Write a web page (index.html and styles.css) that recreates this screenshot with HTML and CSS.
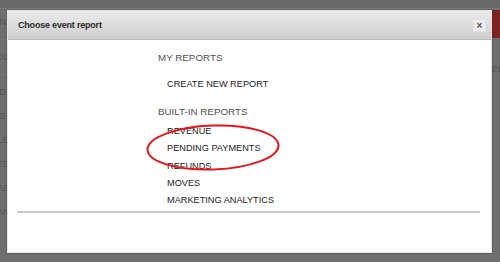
FILE: index.html
```html
<!DOCTYPE html>
<html lang="en">
<head>
    <meta charset="UTF-8">
    <meta name="viewport" content="width=device-width, initial-scale=1.0">
    <title>Choose event report</title>
    <link rel="stylesheet" href="styles.css">
</head>
<body>
    <!-- page behind the dialog, mostly covered -->
    <div class="page">
        <div class="topbar"></div>
        <div class="page-main">
            <ul class="side-nav">
                <li>IN</li>
                <li class="gap">DOC</li>
                <li class="gap">ID</li>
                <li>IS</li>
                <li>LS</li>
                <li>TS</li>
                <li>AS</li>
                <li>AN</li>
            </ul>
            <div class="side-right">
                <div class="red-btn"></div>
                <div class="right-label">EL</div>
            </div>
        </div>
    </div>

    <div class="modal">
        <div class="modal-header">
            <span class="modal-title">Choose event report</span>
            <span class="modal-close">&times;</span>
        </div>
        <div class="modal-body">
            <div class="report-menu">
                <div class="menu-heading">MY REPORTS</div>
                <ul class="menu-list first">
                    <li>CREATE NEW REPORT</li>
                </ul>
                <div class="menu-heading">BUILT-IN REPORTS</div>
                <ul class="menu-list second">
                    <li>REVENUE</li>
                    <li>PENDING PAYMENTS</li>
                    <li>REFUNDS</li>
                    <li>MOVES</li>
                    <li>MARKETING ANALYTICS</li>
                </ul>
            </div>
            <div class="divider"></div>
        </div>
    </div>

    <!-- hand drawn highlight -->
    <svg class="highlight" width="500" height="262" viewBox="0 0 500 262">
        <ellipse cx="213" cy="147.5" rx="65.5" ry="22" transform="rotate(-2 213 147.5)" fill="none" stroke="#e8141b" stroke-width="2"/>
    </svg>
</body>
</html>
```

FILE: styles.css
```css
body {
    margin: 0;
    width: 500px;
    height: 262px;
    overflow: hidden;
    position: relative;
    background: #6f6f6f;
    font-family: "Liberation Sans", Arial, sans-serif;
}

.page {
    height: 262px;
    overflow: hidden;
    display: flex;
    flex-direction: column;
}

.topbar {
    height: 8px;
    background: #676767;
    border-bottom: 1px solid #7a7a7a;
}

.page-main {
    flex: 1;
    display: flex;
    justify-content: space-between;
}

.side-nav {
    list-style: none;
    margin: 0;
    padding: 6px 0 0;
    color: #545454;
    font-size: 9px;
}

.side-nav li {
    line-height: 14px;
    margin-bottom: 10px;
    margin-left: -3px;
}

.side-nav li.gap {
    border-top: 1px solid #767676;
    padding-top: 10px;
}

.side-right {
    width: 30px;
    display: flex;
    flex-direction: column;
    align-items: flex-end;
}

.red-btn {
    margin-top: 1px;
    width: 8px;
    height: 28px;
    background: #7d2424;
}

.right-label {
    margin-top: 26px;
    font-size: 9px;
    color: #555;
    margin-right: -3px;
}

.modal {
    position: absolute;
    left: 7px;
    top: 10px;
    width: 485px;
    height: 243px;
    box-sizing: border-box;
    background: #fff;
    border: 1px solid #e4e4e4;
    box-shadow: 0 0 2px rgba(0,0,0,0.3);
}

.modal-header {
    height: 28px;
    padding: 0 5px 0 10px;
    display: flex;
    align-items: center;
    justify-content: space-between;
    background: linear-gradient(#ebebeb, #cecece);
    border-bottom: 1px solid #b9b9b9;
}

.modal-title {
    font-size: 9px;
    font-weight: bold;
    color: #2a2a2a;
    letter-spacing: -0.2px;
}

.modal-close {
    width: 11px;
    height: 11px;
    background: #eeeeee;
    border: 1px solid #e2e2e2;
    color: #555;
    font-size: 10px;
    font-weight: bold;
    line-height: 11px;
    text-align: center;
}

.modal-body {
    padding: 9px 11px 0 9px;
}

.report-menu {
    padding-left: 141px;
}

.menu-heading {
    font-size: 9.8px;
    line-height: 17px;
    color: #505050;
}

.menu-list {
    list-style: none;
    margin: 0;
    padding-left: 9px;
    font-size: 9.2px;
    color: #222;
}

.menu-list li {
    line-height: 17.2px;
}

.menu-list.first {
    margin: 10px 0;
}

.menu-list.second {
    margin: 3px 0 2px;
}

.divider {
    height: 2px;
    background: #cacaca;
}

.highlight {
    position: absolute;
    left: 0;
    top: 0;
    pointer-events: none;
}
```
